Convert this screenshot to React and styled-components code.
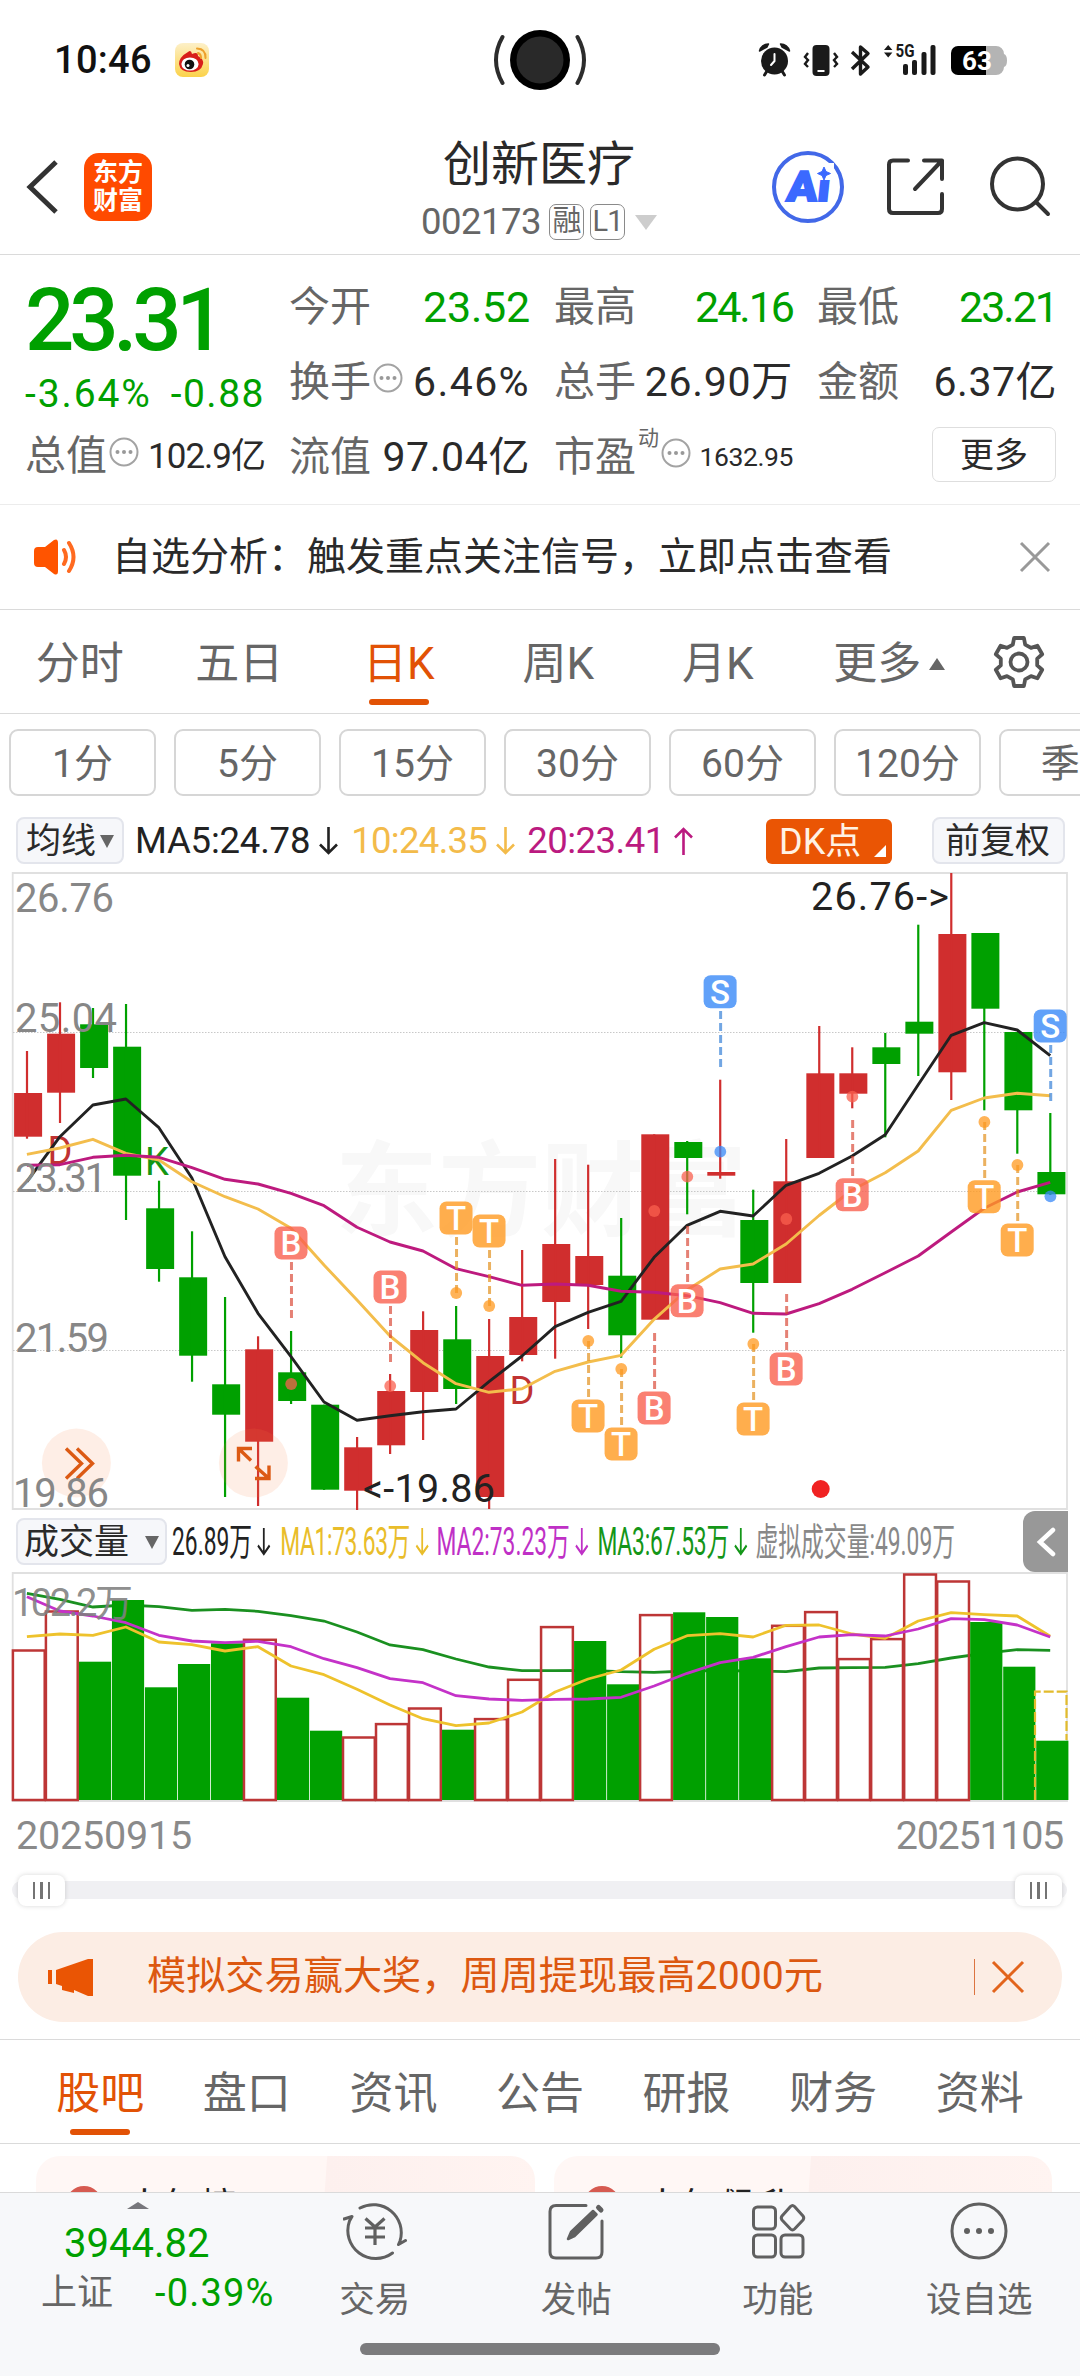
import React from "react";
import styled, { createGlobalStyle, css } from "styled-components";

const GREEN = "#00a000";
const ORANGE = "#e25205";
const INK = "#2a2a2a";
const MUTED = "#666";
const LINE = "#dadada";

const Global = createGlobalStyle`
  * { box-sizing: border-box; }
  body {
    margin: 0;
    background: #fff;
    font-family: Roboto, "Noto Sans CJK SC", sans-serif;
    color: ${INK};
  }
  svg { display: block; flex: none; }
`;

const Screen = styled.div`
  width: 1080px;
  height: 2376px;
  display: flex;
  flex-direction: column;
  overflow: hidden;
  background: #fff;
`;

const Text = styled.span`
  font-size: ${(p) => p.$size}px;
  line-height: 1;
  white-space: nowrap;
  letter-spacing: ${(p) => p.$ls || 0}px;
  color: ${(p) => p.$color || "inherit"};
  font-weight: ${(p) => p.$weight || 400};
`;

/* ---------- status bar ---------- */
const StatusBar = styled.div`
  height: 120px;
  padding: 0 73px 0 54px;
  display: grid;
  grid-template-columns: 436px 100px 1fr;
  align-items: center;
`;
const StatusLeft = styled.div`
  display: flex;
  align-items: center;
  gap: 22px;
`;
const StatusRight = styled.div`
  display: flex;
  justify-content: flex-end;
`;

function WeiboIcon() {
  return (
    <svg width="36" height="36" viewBox="0 0 36 36">
      <defs>
        <linearGradient id="wb" x1="0" y1="0" x2="0" y2="1">
          <stop offset="0" stopColor="#fdf0c8" />
          <stop offset="1" stopColor="#fbd24a" />
        </linearGradient>
      </defs>
      <rect x="1" y="1" width="34" height="34" rx="8" fill="url(#wb)" />
      <path d="M14 10 Q17 7 18 12 Q24 9 24 14 Q30 17 29 22 Q27 30 17 30 Q6 30 5 22 Q5 15 14 10Z" fill="#d81e1a" />
      <ellipse cx="16" cy="22" rx="8.6" ry="6.6" fill="#fff" />
      <circle cx="15.500" cy="22.500" r="4.800" fill="#111" />
      <circle cx="14" cy="23.500" r="1.500" fill="#fff" />
      <path d="M24 11 Q27 12 27 16 M23 6.500 Q32 7 31.500 16" fill="none" stroke="#eda02c" strokeWidth="2" strokeLinecap="round" />
    </svg>
  );
}

function Camera() {
  return (
    <svg width="100" height="70" viewBox="490 25 100 70">
      <circle cx="540" cy="60" r="30" fill="#000" />
      <circle cx="540" cy="60" r="23.500" fill="#292929" />
      <path d="M502.500 37 Q489.500 60 502.500 83 M577.500 37 Q590.500 60 577.500 83" fill="none" stroke="#2c2c2c" strokeWidth="4" strokeLinecap="round" />
    </svg>
  );
}

function StatusIcons() {
  return (
    <svg width="250" height="40" viewBox="757 39 250 40">
      <g fill="#1a1a1a">
        <circle cx="774.500" cy="60" r="13.500" />
        <path d="M759.500 50 a9 9 0 0 1 9 -7 l-1.500 3z M789.500 50 a9 9 0 0 0 -9 -7 l1.500 3z" stroke="#1a1a1a" strokeWidth="1.500" strokeLinejoin="round" />
        <path d="M767 70 l-2.500 4 M782 70 l2.500 4" stroke="#1a1a1a" strokeWidth="3" strokeLinecap="round" />
        <path d="M774.500 53 v7 l-3.500 4" fill="none" stroke="#fff" strokeWidth="2" strokeLinecap="round" />
        <rect x="812.500" y="44" width="17" height="31" rx="4" />
        <rect x="817.500" y="69" width="7" height="2" fill="#fff" />
        <path d="M808 52 l-3 4 3 3 -3 4 3 3 M834 52 l3 4 -3 3 3 4 -3 3" fill="none" stroke="#1a1a1a" strokeWidth="2.400" />
        <path d="M852 51 L868 66 L860.500 73 V46 L868 52.500 L852 68" fill="none" stroke="#1a1a1a" strokeWidth="3.400" strokeLinejoin="round" />
        <path d="M884 49 l4.200-5 4.200 5z M884 51.500 l4.200 5 4.200 -5z" />
        <text x="895.500" y="56" fontSize="17.500" fontWeight="700" textLength="19" lengthAdjust="spacingAndGlyphs">5G</text>
        <rect x="903" y="63" width="5" height="11" rx="2" />
        <rect x="912" y="59" width="5" height="15" rx="2" />
        <rect x="921.500" y="51" width="5" height="23" rx="2" />
        <rect x="930.500" y="44" width="5" height="30" rx="2" />
      </g>
      <path d="M959 45 h37 a8 8 0 0 1 8 8 q3 1 3 6.500 t-3 6.500 a8 8 0 0 1 -8 8 h-37z" fill="#b4b4b4" />
      <path d="M958 45 h28 v29 h-28 a7 7 0 0 1 -7 -7 v-15 a7 7 0 0 1 7 -7z" fill="#000" />
      <text x="962" y="69" fontSize="26" fontWeight="700" fill="#fff" textLength="30">63</text>
    </svg>
  );
}

/* ---------- header ---------- */
const Header = styled.header`
  height: 135px;
  display: grid;
  grid-template-columns: 360px 1fr 360px;
  align-items: center;
  border-bottom: 1px solid ${LINE};
`;
const HeaderLeft = styled.div`
  display: flex;
  align-items: center;
  gap: 24px;
  padding-left: 24px;
`;
const Logo = styled.div`
  width: 68px;
  height: 68px;
  border-radius: 15px;
  background: #ff4a00;
  color: #fff;
  font-size: 25px;
  font-weight: 700;
  line-height: 28px;
  display: grid;
  place-content: center;
  text-align: center;
  padding-bottom: 1px;
`;
const TitleBlock = styled.div`
  display: flex;
  flex-direction: column;
  align-items: center;
  gap: 15px;
  padding: 7px 2px 0 0;
`;
const CodeRow = styled.div`
  display: flex;
  align-items: center;
  gap: 6px;
`;
const Badge = styled.span`
  width: 35px;
  height: 36px;
  margin-left: ${(p) => p.$ml || 0}px;
  border: 1.5px solid #8a8a8a;
  border-radius: 7px;
  color: ${MUTED};
  font-size: 29px;
  line-height: 32px;
  text-align: center;
  letter-spacing: -1px;
`;
const Caret = styled.i`
  width: 0;
  height: 0;
  margin-left: ${(p) => p.$ml || 0}px;
  border-left: ${(p) => p.$w / 2}px solid transparent;
  border-right: ${(p) => p.$w / 2}px solid transparent;
  ${(p) =>
    p.$up
      ? css`border-bottom: ${p.$h}px solid ${p.$color};`
      : css`border-top: ${p.$h}px solid ${p.$color};`}
`;
const HeaderRight = styled.div`
  display: flex;
  justify-content: flex-end;
  padding-right: 28px;
`;

function HeaderIcons() {
  return (
    <svg width="284" height="80" viewBox="768 147 284 80">
      <circle cx="808" cy="187" r="34" fill="#fff" stroke="#4268e8" strokeWidth="4" />
      <text x="786.500" y="201" fontSize="42" fontWeight="900" fill="#3b69ff" stroke="#3b69ff" strokeWidth="1.800" textLength="43" lengthAdjust="spacingAndGlyphs" transform="translate(20.500 0) skewX(-6)">Ai</text>
      <rect x="814" y="163" width="20" height="17" fill="#fff" />
      <path d="M824 167 l2 4.500 4.500 2 -4.500 2 -2 4.500 -2 -4.500 -4.500 -2 4.500 -2z" fill="#3b69ff" stroke="#3b69ff" strokeWidth="1" />
      <g fill="none" stroke="#333" strokeWidth="4" strokeLinecap="round" strokeLinejoin="round">
        <path d="M908 160.500 H893 q-4 0 -4 4 V209 q0 4 4 4 H938 q4 0 4 -4 V194" />
        <path d="M924 160.500 H942 V179 M942 160.500 L915 189" />
        <circle cx="1017.500" cy="184" r="25.500" />
        <path d="M1036 202 L1048 214" />
      </g>
    </svg>
  );
}

/* ---------- quote ---------- */
const Quote = styled.section`
  height: 250px;
  padding: 15px 24px 0 25px;
  display: grid;
  grid-template-columns: 264px 1fr;
  border-bottom: 1px solid #ececec;
`;
const Summary = styled.div`
  display: flex;
  flex-direction: column;
  padding-right: 26px;
`;
const Line = styled.div`
  height: ${(p) => p.$h}px;
  display: flex;
  align-items: center;
  justify-content: ${(p) => (p.$spread ? "space-between" : "flex-start")};
`;
const Stats = styled.div`
  display: grid;
  grid-template-columns: 239px 237px 238px;
  grid-auto-rows: 75px;
  column-gap: 26px;
`;
const Cell = styled.div`
  display: flex;
  align-items: center;
`;
const Value = styled(Text)`
  margin-left: auto;
  margin-right: -2px;
`;
const Super = styled.sup`
  align-self: flex-start;
  margin: ${(p) => p.$top}px 0 0 2px;
  font-size: 21px;
  line-height: 1;
  color: ${MUTED};
`;
const MoreButton = styled.button`
  width: 124px;
  height: 55px;
  margin: 0 -1px 6px auto;
  border: 1.5px solid #dedede;
  border-radius: 7px;
  background: #fff;
  color: ${INK};
  font: 34px/1 Roboto, "Noto Sans CJK SC", sans-serif;
  padding: 0;
`;
const DotsIcon = styled.svg`
  margin-top: -9px;
`;

function Dots() {
  return (
    <DotsIcon width="32" height="32" viewBox="0 0 32 32">
      <circle cx="17" cy="16" r="13.500" fill="none" stroke="#a3a3a3" strokeWidth="2" />
      <g fill="#999">
        <circle cx="10.500" cy="16" r="2" />
        <circle cx="17" cy="16" r="2" />
        <circle cx="23.500" cy="16" r="2" />
      </g>
    </DotsIcon>
  );
}

function Stat({ label, value, color, size = 41, ls = 0, info, sup }) {
  return (
    <Cell>
      <Text $size={41} $color={MUTED}>{label}</Text>
      {sup && <Super $top={8}>{sup}</Super>}
      {info && <Dots />}
      <Value $size={size} $ls={ls} $color={color}>{value}</Value>
    </Cell>
  );
}

/* ---------- notice ---------- */
const Notice = styled.section`
  height: 105px;
  padding: 0 29px 0 32px;
  display: flex;
  align-items: center;
  border-bottom: 1px solid ${LINE};
`;
const NoticeText = styled(Text)`
  flex: 1;
  padding-left: 32px;
`;

/* ---------- period tabs ---------- */
const Periods = styled.nav`
  height: 104px;
  display: grid;
  grid-template-columns: repeat(6, 159.500px) 1fr;
  border-bottom: 1px solid ${LINE};
`;
const Tab = styled.div`
  position: relative;
  display: flex;
  align-items: center;
  justify-content: center;
  padding: ${(p) => (p.$pt === undefined ? 5 : p.$pt)}px 0 0 ${(p) => p.$pl || 0}px;
  font-size: 44px;
  line-height: 1;
  white-space: nowrap;
  color: ${(p) => (p.$active ? ORANGE : MUTED)};
  ${(p) =>
    p.$active &&
    css`
      &::after {
        content: "";
        position: absolute;
        left: calc(50% - 30px);
        bottom: 8px;
        width: 60px;
        height: 6px;
        border-radius: 3px;
        background: ${ORANGE};
      }
    `}
`;

function gearPath(cx, cy) {
  const pts = [];
  for (let k = 0; k < 6; k++) {
    const a = (k * 60 - 90) * (Math.PI / 180);
    [[-0.34, 18.5], [-0.2, 24.5], [0.2, 24.5], [0.34, 18.5]].forEach(([d, r]) => {
      pts.push(`${(cx + r * Math.cos(a + d)).toFixed(1)} ${(cy + r * Math.sin(a + d)).toFixed(1)}`);
    });
  }
  return `M${pts.join("L")}Z`;
}

/* ---------- minute chips ---------- */
const Chips = styled.div`
  height: 97px;
  padding: 15px 0 0 9px;
  display: flex;
  gap: 18px;
  overflow: hidden;
`;
const Chip = styled.div`
  flex: none;
  width: 147px;
  height: 67px;
  padding-top: 3px;
  border: 2px solid #d6d6d6;
  border-radius: 9px;
  display: grid;
  place-content: center;
  font-size: 39px;
  line-height: 1;
  color: ${MUTED};
`;

/* ---------- indicator rows ---------- */
const MaRow = styled.div`
  height: 61px;
  padding: 6px 15px 0 16px;
  display: flex;
  align-items: flex-start;
`;
const Select = styled.div`
  flex: none;
  width: ${(p) => p.$w}px;
  height: 47px;
  padding: 2px ${(p) => p.$px || 8}px 0;
  border: 2px solid #e3e5ec;
  border-radius: 8px;
  background: #f6f7fa;
  display: flex;
  align-items: center;
  justify-content: space-between;
  font-size: 35px;
  line-height: 1;
  white-space: nowrap;
`;
const Indicator = styled.div`
  height: 47px;
  padding-top: 1px;
  margin-left: ${(p) => p.$ml}px;
  display: flex;
  align-items: center;
  gap: ${(p) => p.$gap || 8}px;
  color: ${(p) => p.$color};
`;
const DkButton = styled.div`
  position: relative;
  width: 126px;
  height: 45px;
  margin: 2px 40px 0 auto;
  padding-left: 13px;
  border-radius: 6px;
  background: #ea5504;
  color: #fff2e4;
  font-size: 36px;
  line-height: 46px;
  &::after {
    content: "";
    position: absolute;
    right: 6px;
    bottom: 7px;
    border-left: 12px solid transparent;
    border-bottom: 12px solid #fff;
  }
`;
const VolumeRow = styled.div`
  height: 61px;
  padding-left: 16px;
  display: flex;
  align-items: center;
`;
const Condensed = styled.div`
  width: 850px;
  margin-left: 5px;
`;
const CondensedInner = styled.div`
  width: max-content;
  display: flex;
  align-items: center;
  transform: scaleX(0.6);
  transform-origin: left center;
`;
const Collapse = styled.div`
  width: 45px;
  height: 61px;
  margin: 0 12px 0 auto;
  border-radius: 12px 0 0 12px;
  background: #989898;
  display: grid;
  place-content: center;
`;

function Arrow({ up, w = 21 }) {
  return (
    <svg width={w} height="30" viewBox="0 0 21 30" preserveAspectRatio="none">
      <path
        d={up ? "M10.500 29 V3 M2 11.500 L10.500 3 L19 11.500" : "M10.500 1 V27 M2 18.500 L10.500 27 L19 18.500"}
        fill="none"
        stroke="currentColor"
        strokeWidth="2.600"
      />
    </svg>
  );
}

/* ---------- candle chart ---------- */
const RED = "#d02e2e";
const cx = (i) => 26.9 + 33.01 * i;

// [colour, body top, body bottom, wick top, wick bottom]
const CANDLES = [
  ["r", 1093, 1136.7, 1051, 1138.7], ["r", 1033.7, 1092.7, 1002.3, 1123], ["g", 1024.3, 1068, 1008, 1078],
  ["g", 1046.7, 1175.7, 1004, 1220], ["g", 1208.3, 1269, 1180.7, 1281.7], ["g", 1277.3, 1355.7, 1231.3, 1381.7],
  ["g", 1384.3, 1414.7, 1297, 1497], ["r", 1349.3, 1441.7, 1336.3, 1506], ["g", 1372.3, 1401, 1331, 1404],
  ["g", 1404.7, 1489.7, 1404.7, 1490], ["r", 1447.3, 1490.7, 1437, 1510], ["r", 1391, 1445.3, 1374, 1454],
  ["r", 1330, 1392, 1311.3, 1440], ["g", 1339.3, 1389, 1306, 1404], ["r", 1356, 1497, 1319, 1509],
  ["r", 1317, 1355, 1250, 1361.3], ["r", 1244, 1302, 1159, 1358.7], ["r", 1256, 1285, 1164.7, 1329],
  ["g", 1275.7, 1335.3, 1218, 1357.7], ["r", 1134.3, 1319.7, 1134.3, 1319.7], ["g", 1142, 1158, 1141, 1214.3],
  ["r", 1172, 1175.7, 1079.7, 1178.7], ["g", 1220, 1283, 1189.7, 1332.7], ["r", 1181.3, 1283, 1139, 1283],
  ["r", 1073.3, 1158, 1026, 1158], ["r", 1073.3, 1093.7, 1047.3, 1108.3], ["g", 1047.3, 1064, 1033, 1137.3],
  ["g", 1021.7, 1033.7, 924.7, 1076], ["r", 934, 1072.3, 873, 1100], ["g", 933, 1008.7, 933, 1110.3],
  ["g", 1032, 1110.3, 1032, 1153.7], ["g", 1172, 1194.3, 1113, 1195],
];
const MA5 = [1181.7, 1136.7, 1105, 1099, 1127.7, 1178, 1256.7, 1313.3, 1356.7, 1402, 1420.3, 1415.7, 1411.7, 1409, 1381.7, 1356, 1326.7, 1312.3, 1301.3, 1257.3, 1225.3, 1211.3, 1216, 1185.3, 1173.3, 1156, 1134.7, 1084.7, 1035.3, 1022.7, 1030, 1055.7];
const MA10 = [1154.3, 1148, 1139.3, 1153.3, 1160, 1181.7, 1196.7, 1209, 1228.3, 1265, 1300, 1336, 1362.7, 1383.7, 1392.3, 1388.7, 1371.3, 1362, 1355.3, 1319.3, 1290, 1269, 1264, 1244, 1215.5, 1190, 1172.7, 1151, 1110.3, 1098, 1093.3, 1095.7];
const MA20 = [1165.3, 1164.7, 1157.3, 1155.3, 1157.3, 1167.7, 1179.3, 1184, 1193.3, 1205.7, 1227.3, 1242, 1251, 1268.7, 1276.7, 1285.3, 1284, 1285.3, 1291.3, 1292.3, 1295.7, 1302.7, 1313.3, 1314, 1303.7, 1289.3, 1272.7, 1256, 1232, 1208.3, 1192, 1182.3];

// index, letter, badge centre, dash start, dot centre
const MARKS = [
  [8, "B", 1243, 1262, 1384], [11, "B", 1287, 1306, 1386], [13, "T", 1218, 1237, 1293], [14, "T", 1231, 1250, 1306],
  [17, "T", 1416, 1341, 1341], [18, "T", 1444, 1369, 1369], [19, "B", 1408, 1333, 1211], [20, "B", 1300.7, 1226, 1176.7],
  [21, "S", 991.8, 1011, 1151.7], [22, "T", 1419, 1344, 1344], [23, "B", 1369, 1294, 1219], [25, "B", 1194.7, 1120, 1096.7],
  [29, "T", 1196.7, 1122, 1122], [30, "T", 1240, 1165, 1165], [31, "S", 1026, 1045, 1196.3],
];
const MARK_FILL = { B: "#f9604f", T: "#ff9a20", S: "#3a8af8" };
const MARK_DASH = { B: "#d84634", T: "#e28c14", S: "#2f7cd6" };

const path = (ys, base = 0, k = 1) => ys.map((y, i) => `${i ? "L" : "M"}${cx(i).toFixed(1)} ${(base + y / k).toFixed(1)}`).join("");

function CandleChart() {
  return (
    <svg width="1080" height="639" viewBox="0 872 1080 639">
      <text x="335" y="1228" fontSize="103" fontWeight="700" fill="#f8f8f8">东方财富</text>
      <path d="M12.700 873 H1067 V1509 H12.700Z" fill="none" stroke="#e0e0e0" strokeWidth="1.800" />
      <path d="M13 1032.500 H1066 M13 1191.500 H1066 M13 1350.500 H1066" stroke="#c8c8c8" strokeWidth="1" strokeDasharray="1.500 1.500" />
      {CANDLES.map(([c, t, b, wt, wb], i) => (
        <g key={i} fill={c === "r" ? RED : GREEN}>
          <rect x={cx(i) - 12.8} y={t} width="28" height={b - t} />
          <rect x={cx(i) - 1} y={wt} width="2.200" height={wb - wt} />
        </g>
      ))}
      <g fontSize="38">
        <text x="47.500" y="1163.500" fill="#c03232">D</text>
        <text x="145" y="1175" fill="#149614">K</text>
        <text x="509.500" y="1403.500" fill="#c03232">D</text>
      </g>
      <g fill="none" strokeWidth="2.900" strokeLinejoin="round">
        <path d={path(MA5)} stroke="#222" />
        <path d={path(MA10)} stroke="#f3bd4c" />
        <path d={path(MA20)} stroke="#bd1a7e" />
      </g>
      {MARKS.map(([i, l, y, d, dot]) => (
        <g key={i}>
          <path d={`M${cx(i) + 0.5} ${d} v56`} stroke={MARK_DASH[l]} strokeOpacity="0.680" strokeWidth="3" strokeDasharray="8 4" />
          <circle cx={cx(i) + 0.2} cy={dot} r="5.900" fill={MARK_FILL[l]} fillOpacity="0.750" />
          <rect x={cx(i) - 16.500} y={y - 16.500} width="33" height="33" rx="7" fill={MARK_FILL[l]} fillOpacity="0.800" />
          <text x={cx(i)} y={y + 11.800} textAnchor="middle" fontSize="33" fontWeight="500" fill="#fff">{l}</text>
        </g>
      ))}
      <g fill="#f87a40" fillOpacity="0.130">
        <circle cx="76.400" cy="1463" r="34.500" />
        <circle cx="253.400" cy="1463" r="34.500" />
      </g>
      <g fill="none" stroke="#dc5a14" strokeWidth="3.400">
        <path d="M66 1448.500 L81.500 1463.500 L66 1478.500 M77 1448.500 L92.500 1463.500 L77 1478.500" />
        <path d="M238.500 1461.500 V1448.500 H252 M238.500 1448.500 L251 1460.500 M255.500 1466.500 L269 1478.500 M255 1478.500 H269 V1465.500" />
      </g>
      <g fontSize="40" fill="#878787">
        <text x="15" y="911.500" textLength="99">26.76</text>
        <text x="15" y="1032" textLength="102">25.04</text>
        <text x="15" y="1192" textLength="92">23.31</text>
        <text x="15" y="1351.500" textLength="94">21.59</text>
        <text x="13" y="1506.500" textLength="96">19.86</text>
      </g>
      <g fontSize="39.500" fill="#222">
        <text x="811" y="909.500" textLength="138">26.76-&gt;</text>
        <text x="363" y="1501.500" textLength="132">&lt;-19.86</text>
      </g>
      <circle cx="820.700" cy="1489" r="9" fill="#f02222" />
    </svg>
  );
}

/* ---------- volume chart ---------- */
const VOLUMES = [
  ["r", 1649.7], ["r", 1610.7], ["g", 1661.7], ["g", 1600], ["g", 1687.3], ["g", 1664], ["g", 1643.3], ["r", 1639],
  ["g", 1697.7], ["g", 1730.7], ["r", 1736.7], ["r", 1723.3], ["r", 1707.7], ["g", 1729.7], ["r", 1718.3], ["r", 1679],
  ["r", 1626.3], ["g", 1641], ["g", 1684.3], ["r", 1614.3], ["g", 1612.3], ["g", 1617], ["g", 1658.3], ["r", 1625],
  ["r", 1611.3], ["r", 1658.3], ["r", 1638.3], ["r", 1573.7], ["r", 1580.7], ["g", 1622], ["g", 1666.7], ["g", 1740.7],
];
const V1 = [410, 402, 406, 381, 426, 434, 453, 440, 498, 524, 568, 615, 656, 677, 669, 636, 576, 537, 510, 448, 407, 401, 411, 376, 375, 402, 415, 363, 338, 344, 348, 409];
const V2 = [290, 333, 348, 368, 406, 423, 428, 424, 440, 476, 503, 536, 548, 587, 597, 601, 598, 597, 592, 558, 520, 488, 472, 440, 411, 404, 408, 387, 356, 359, 375, 411];
const V3 = [280, 298, 321, 315, 320, 331, 328, 334, 347, 363, 396, 435, 449, 477, 501, 512, 512, 511, 515, 517, 513, 512, 513, 515, 504, 503, 502, 491, 474, 460, 449, 451];

function VolumeChart() {
  return (
    <svg width="1080" height="232" viewBox="0 1572 1080 232">
      <path d="M12.700 1573 H1067 V1801 H12.700Z" fill="none" stroke="#e0e0e0" strokeWidth="1.800" />
      <path d={path(V3, 1500, 3)} fill="none" stroke="#1a9020" strokeWidth="2.800" />
      {VOLUMES.map(([c, t], i) => {
        const x = 12.9 + 33.01 * i;
        return c === "g" ? (
          <rect key={i} x={x} y={t} width="32.200" height={1800 - t} fill={GREEN} />
        ) : (
          <rect key={i} x={x} y={t + 0.8} width="31.800" height={1799.2 - t} fill="none" stroke="#bd3636" strokeWidth="2.500" />
        );
      })}
      <path d="M1035 1800 V1691.700 H1066.500 V1740" fill="none" stroke="#e2bb2c" strokeWidth="2.200" strokeDasharray="10 3" />
      <g fill="none" strokeWidth="2.800" strokeLinejoin="round">
        <path d={path(V1, 1500, 3)} stroke="#eec22c" />
        <path d={path(V2, 1500, 3)} stroke="#c432c8" />
      </g>
      <text x="12" y="1616" fontSize="38" fill="#808080" fillOpacity="0.900" textLength="121">102.2万</text>
    </svg>
  );
}

const Dates = styled.div`
  height: 71px;
  padding: 12px 17px 0 16px;
  display: flex;
  justify-content: space-between;
  color: #8a8a8a;
`;
const Slider = styled.div`
  height: 18px;
  margin: 6px 13px 0 12px;
  border-radius: 9px;
  background: #f0f0f3;
  display: flex;
  align-items: center;
  justify-content: space-between;
  padding: 0 5px 0 6px;
`;
const Handle = styled.div`
  width: 47px;
  height: 31px;
  border-radius: 8px;
  background: #fff;
  box-shadow: 0 0 5px rgba(0, 0, 0, 0.16);
  display: flex;
  align-items: center;
  justify-content: center;
  gap: 5px;
  &::before, &::after, & > i {
    content: "";
    width: 2.5px;
    height: 17px;
    background: #747474;
  }
`;

/* ---------- banner ---------- */
const Banner = styled.section`
  height: 90px;
  margin: 33px 18px 17px;
  padding: 0 37px 0 29px;
  border-radius: 45px;
  background: #fcede4;
  display: flex;
  align-items: center;
  color: #dc5810;
`;
const BannerText = styled(Text)`
  flex: 1;
  padding-left: 52px;
`;
const Split = styled.i`
  width: 1.5px;
  height: 36px;
  margin-right: 16px;
  background: #dc7440;
`;

/* ---------- content tabs + cards ---------- */
const Sections = styled.nav`
  height: 105px;
  padding: 0 27px;
  display: grid;
  grid-template-columns: repeat(7, 1fr);
  border-top: 1px solid ${LINE};
  border-bottom: 1px solid ${LINE};
`;
const Cards = styled.div`
  flex: 1;
  min-height: 0;
  padding: 12px 28px 0 36px;
  display: grid;
  grid-template-columns: 499px 498px;
  column-gap: 19px;
  overflow: hidden;
`;
const Card = styled.div`
  height: 120px;
  padding: 30px 0 0 30px;
  border-radius: 24px;
  background: linear-gradient(94deg, #fff7f5 0 ${(p) => p.$cut}px, #fdf0ee ${(p) => p.$cut + 1}px, #fff4f1);
  display: flex;
  gap: 24px;
  font-size: 37px;
  line-height: 44px;
  color: #222;
`;
const CardDot = styled.i`
  width: 36px;
  height: 36px;
  border-radius: 50%;
  background: #d65a50;
`;

/* ---------- bottom bar ---------- */
const Bottom = styled.footer`
  flex: none;
  height: 184px;
  border-top: 1px solid ${LINE};
  background: #f7f8fa;
  display: flex;
  flex-direction: column;
  align-items: center;
`;
const Actions = styled.div`
  width: 100%;
  height: 150px;
  display: grid;
  grid-template-columns: 274px repeat(4, 201.500px);
`;
const Index = styled.div`
  padding: 9px 0 0 41px;
  display: flex;
  flex-direction: column;
`;
const IndexCaret = styled(Caret)`
  align-self: center;
  margin-right: 40px;
`;
const IndexRow = styled.div`
  margin-top: ${(p) => p.$mt}px;
  padding-left: ${(p) => p.$pl || 0}px;
  display: flex;
  align-items: center;
  gap: 42px;
`;
const Action = styled.div`
  padding-top: 6px;
  display: flex;
  flex-direction: column;
  align-items: center;
  gap: 20px;
  color: ${MUTED};
`;
const HomeBar = styled.div`
  width: 360px;
  height: 12px;
  border-radius: 6px;
  background: #7b7b7d;
`;

const icon = { width: 64, height: 64, viewBox: "0 0 64 64", fill: "none", stroke: "#606060", strokeWidth: 3, strokeLinecap: "round", strokeLinejoin: "round" };
const TradeIcon = () => (
  <svg {...icon}>
    <path d="M17 9 A28 28 0 0 1 57 42 l-1.500 3.500 7 -4" />
    <path d="M49.500 54 A28 28 0 0 1 6.500 22 l2.500 -4.500 -8 2.500" />
    <path d="M22.500 19.500 L32 28 L41.500 19.500 M22 29 H42 M22 38 H42 M32 29 V46" strokeLinecap="butt" strokeWidth="3.200" />
  </svg>
);
const PostIcon = () => (
  <svg {...icon}>
    <path d="M42 6.500 H12 q-6 0 -6 6 V53 q0 6 6 6 H52 q6 0 6 -6 V22" />
    <path d="M24 40 L27 33 L49 12 L52.500 15.500 L30.500 37Z" fill="#606060" strokeWidth="2.500" />
    <path d="M54.500 8.500 L57 11" strokeWidth="5" />
  </svg>
);
const GridIcon = () => (
  <svg {...icon}>
    <rect x="7.500" y="8" width="22" height="22" rx="4" />
    <rect x="7.500" y="36" width="22" height="22" rx="4" />
    <rect x="35" y="36" width="22" height="22" rx="4" />
    <path d="M44.500 7.500 q2 -2 4 0 L57 17 q1.500 2 0 4 L48.500 30 q-2 2 -4 0 L36 21 q-1.500 -2 0 -4Z" />
  </svg>
);
const MoreIcon = () => (
  <svg {...icon}>
    <circle cx="32" cy="32" r="27" />
    <g fill="#606060" stroke="none">
      <circle cx="20" cy="32" r="3" />
      <circle cx="32" cy="32" r="3" />
      <circle cx="44" cy="32" r="3" />
    </g>
  </svg>
);

const ACTIONS = [["交易", TradeIcon], ["发帖", PostIcon], ["功能", GridIcon], ["设自选", MoreIcon]];

export default function App() {
  return (
    <Screen>
      <Global />
      <StatusBar>
        <StatusLeft>
          <Text $size={38} $weight={500} $ls={0.3} $color="#111">10:46</Text>
          <WeiboIcon />
        </StatusLeft>
        <Camera />
        <StatusRight><StatusIcons /></StatusRight>
      </StatusBar>

      <Header>
        <HeaderLeft>
          <svg width="36" height="60" viewBox="0 0 36 60">
            <path d="M32 5 L6 30 L32 55" fill="none" stroke="#333" strokeWidth="5" />
          </svg>
          <Logo><span>东方</span><span>财富</span></Logo>
        </HeaderLeft>
        <TitleBlock>
          <Text $size={48}>创新医疗</Text>
          <CodeRow>
            <Text $size={36.5} $ls={-0.5} $color={MUTED}>002173</Text>
            <Badge $ml={2}>融</Badge>
            <Badge>L1</Badge>
            <Caret $w={22} $h={15} $ml={4} $color="#cdcdcd" />
          </CodeRow>
        </TitleBlock>
        <HeaderRight><HeaderIcons /></HeaderRight>
      </Header>

      <Quote>
        <Summary>
          <Line $h={100}><Text $size={87} $weight={500} $ls={-5.3} $color={GREEN}>23.31</Text></Line>
          <Line $h={48} $spread>
            <Text $size={39} $ls={1.9} $color={GREEN}>-3.64%</Text>
            <Value $size={39} $ls={1.5} $color={GREEN}>-0.88</Value>
          </Line>
          <Line $h={77}>
            <Text $size={41} $color={MUTED}>总值</Text>
            <Dots />
            <Value $size={35} $ls={-1}>102.9亿</Value>
          </Line>
        </Summary>
        <Stats>
          <Stat label="今开" value="23.52" color={GREEN} size={43} ls={-0.2} />
          <Stat label="最高" value="24.16" color={GREEN} size={43} ls={-2} />
          <Stat label="最低" value="23.21" color={GREEN} size={43} ls={-2} />
          <Stat label="换手" info value="6.46%" ls={1.4} />
          <Stat label="总手" value="26.90万" ls={0.7} />
          <Stat label="金额" value="6.37亿" ls={0.5} />
          <Stat label="流值" value="97.04亿" ls={0.6} />
          <Stat label="市盈" sup="动" info value="1632.95" size={26.5} ls={-0.4} />
          <Cell><MoreButton>更多</MoreButton></Cell>
        </Stats>
      </Quote>

      <Notice>
        <svg width="48" height="40" viewBox="0 0 48 40">
          <path d="M2 14 q0 -4 4 -4 H13 L22 3 q4 -2 4 3 V34 q0 5 -4 3 L13 30 H6 q-4 0 -4 -4Z" fill="#ff5400" />
          <path d="M32 13 Q36 20 32 27 M37 6 Q46 20 37 34" fill="none" stroke="#ff6a20" strokeWidth="4" strokeLinecap="round" />
        </svg>
        <NoticeText $size={39}>自选分析：触发重点关注信号，立即点击查看</NoticeText>
        <svg width="32" height="32" viewBox="0 0 32 32">
          <path d="M2 2 L30 30 M30 2 L2 30" stroke="#999" strokeWidth="3" />
        </svg>
      </Notice>

      <Periods>
        <Tab>分时</Tab>
        <Tab>五日</Tab>
        <Tab $active>日K</Tab>
        <Tab>周K</Tab>
        <Tab>月K</Tab>
        <Tab $pl={24}>更多<Caret $up $w={16} $h={12} $ml={8} $color={MUTED} /></Tab>
        <Tab $pt={0}>
          <svg width="58" height="58" viewBox="0 0 58 58">
            <g fill="none" stroke="#555" strokeWidth="3.800" strokeLinejoin="round">
              <path d={gearPath(29, 29)} />
              <circle cx="29" cy="29" r="8.500" />
            </g>
          </svg>
        </Tab>
      </Periods>

      <Chips>
        {["1分", "5分", "15分", "30分", "60分", "120分", "季K"].map((t) => <Chip key={t}>{t}</Chip>)}
      </Chips>

      <MaRow>
        <Select $w={108}>均线<Caret $w={15} $h={13} $color={MUTED} /></Select>
        <Indicator $ml={11} $color="#222"><Text $size={36.5} $ls={-0.2}>MA5:24.78</Text><Arrow /></Indicator>
        <Indicator $ml={12} $color="#f3bb4a"><Text $size={36.5} $ls={-0.7}>10:24.35</Text><Arrow /></Indicator>
        <Indicator $ml={11} $color="#bb1a80"><Text $size={36.5} $ls={-0.5}>20:23.41</Text><Arrow up /></Indicator>
        <DkButton>DK点</DkButton>
        <Select $w={133} $px={11}>前复权</Select>
      </MaRow>

      <CandleChart />

      <VolumeRow>
        <Select $w={151} $px={6}>成交量<Caret $w={15} $h={13} $color={MUTED} /></Select>
        <Condensed>
          <CondensedInner>
            <Indicator $ml={0} $gap={8} $color="#222"><Text $size={38}>26.89万</Text><Arrow w={24} /></Indicator>
            <Indicator $ml={15} $gap={8} $color="#e9bd2a"><Text $size={38} $ls={-0.6}>MA1:73.63万</Text><Arrow w={24} /></Indicator>
            <Indicator $ml={12} $gap={8} $color="#bf30c6"><Text $size={38}>MA2:73.23万</Text><Arrow w={24} /></Indicator>
            <Indicator $ml={14} $gap={8} $color="#149618"><Text $size={38} $ls={-0.3}>MA3:67.53万</Text><Arrow w={24} /></Indicator>
            <Indicator $ml={12} $color="#888"><Text $size={38}>虚拟成交量:49.09万</Text></Indicator>
          </CondensedInner>
        </Condensed>
        <Collapse>
          <svg width="20" height="32" viewBox="0 0 20 32">
            <path d="M17 4 L4 16 L17 28" fill="none" stroke="#fff" strokeWidth="4.500" strokeLinecap="round" />
          </svg>
        </Collapse>
      </VolumeRow>

      <VolumeChart />

      <Dates>
        <Text $size={39.5} $ls={-0.2}>20250915</Text>
        <Text $size={39.5} $ls={-1.3}>20251105</Text>
      </Dates>
      <Slider>
        <Handle><i /></Handle>
        <Handle><i /></Handle>
      </Slider>

      <Banner>
        <svg width="48" height="40" viewBox="0 0 48 40">
          <path d="M1 13 h4 v14 h-4z M9 13 L41 2 h5 V39 h-5 L27 33 V36 L15 33 V29 L9 27Z" fill="#ea5504" />
        </svg>
        <BannerText $size={39.2}>模拟交易赢大奖，周周提现最高2000元</BannerText>
        <Split />
        <svg width="34" height="34" viewBox="0 0 34 34">
          <path d="M2 2 L32 32 M32 2 L2 32" stroke="#e2641c" strokeWidth="3" />
        </svg>
      </Banner>

      <Sections>
        {["股吧", "盘口", "资讯", "公告", "研报", "财务", "资料"].map((t, i) => (
          <Tab key={t} $active={i === 0}>{t}</Tab>
        ))}
      </Sections>

      <Cards>
        <Card $cut={290}><CardDot />人气榜</Card>
        <Card $cut={256}><CardDot />人气飙升</Card>
      </Cards>

      <Bottom>
        <Actions>
          <Index>
            <IndexCaret $up $w={22} $h={7} $color="#77777c" />
            <IndexRow $mt={15} $pl={23}><Text $size={40} $color={GREEN}>3944.82</Text></IndexRow>
            <IndexRow $mt={10}>
              <Text $size={36} $color={MUTED}>上证</Text>
              <Text $size={38} $ls={1.2} $color={GREEN}>-0.39%</Text>
            </IndexRow>
          </Index>
          {ACTIONS.map(([label, Icon]) => (
            <Action key={label}>
              <Icon />
              <Text $size={35.5}>{label}</Text>
            </Action>
          ))}
        </Actions>
        <HomeBar />
      </Bottom>
    </Screen>
  );
}
